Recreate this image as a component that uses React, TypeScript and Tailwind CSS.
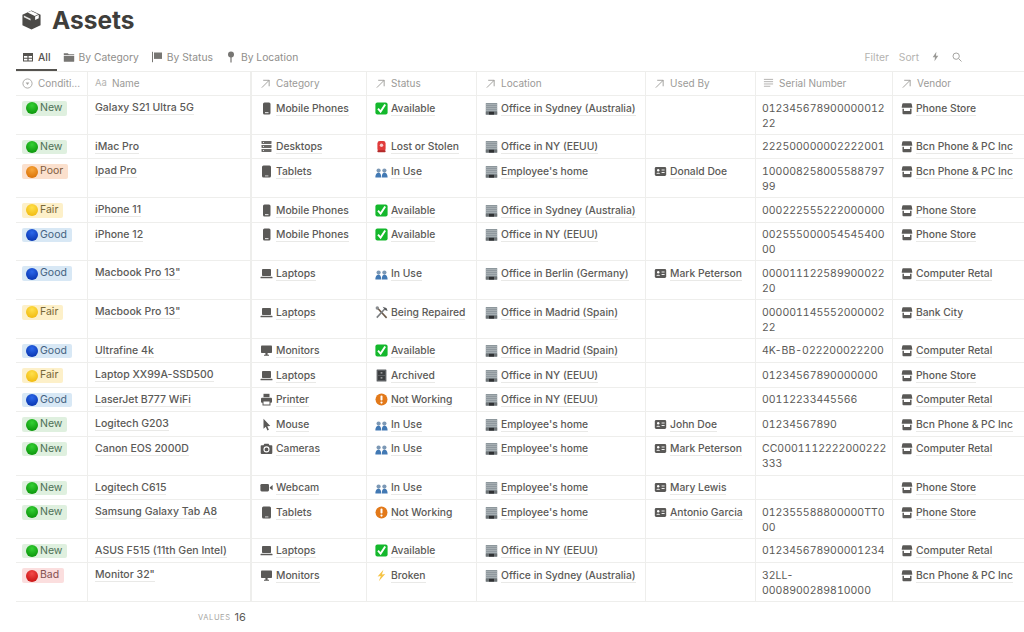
import type { ReactNode } from "react";

const font = "font-['Inter',sans-serif]";
const gridCols = "grid grid-cols-[72px_164px_115px_110px_169px_110px_137px_131px]";
const base = "w-[13px] h-[13px] shrink-0";

function PhoneIcon() {
  return (
    <svg viewBox="0 0 13 13" className={base}>
      <rect x="3" y="0.5" width="7.5" height="12" rx="1.5" fill="#5a5957" />
      <rect x="5" y="10" width="3.5" height="1.2" fill="#d8d8d8" />
    </svg>
  );
}
function TabletIcon() {
  return (
    <svg viewBox="0 0 13 13" className={base}>
      <rect x="2" y="0.5" width="9" height="12" rx="1.5" fill="#5a5957" />
      <rect x="5" y="10.4" width="3.4" height="1" fill="#cfcfcf" />
    </svg>
  );
}
function DesktopIcon() {
  return (
    <svg viewBox="0 0 13 13" className={base}>
      <rect x="1.5" y="1" width="10" height="3" rx="0.4" fill="#6a6967" />
      <rect x="1.5" y="5" width="10" height="3" rx="0.4" fill="#6a6967" />
      <rect x="1.5" y="9" width="10" height="3" rx="0.4" fill="#6a6967" />
      <path d="M3 2.5h1M3 6.5h1M3 10.5h1" stroke="#fff" strokeWidth="0.8" />
    </svg>
  );
}
function LaptopIcon() {
  return (
    <svg viewBox="0 0 13 13" className={base}>
      <rect x="2" y="2" width="9" height="7" rx="0.8" fill="#5a5957" />
      <rect x="0.5" y="9.7" width="12" height="1.6" rx="0.6" fill="#5a5957" />
    </svg>
  );
}
function MonitorIcon() {
  return (
    <svg viewBox="0 0 13 13" className={base}>
      <rect x="1" y="1.5" width="11" height="7.6" rx="0.8" fill="#5a5957" />
      <path d="M5.4 9.1h2.2v1.6H9v1H4v-1h1.4z" fill="#5a5957" />
    </svg>
  );
}
function PrinterIcon() {
  return (
    <svg viewBox="0 0 13 13" className={base}>
      <rect x="3.5" y="0.8" width="6" height="3.4" fill="#5a5957" />
      <rect x="1" y="4.8" width="11" height="5" rx="1" fill="#5a5957" />
      <rect x="3" y="8" width="7" height="4" fill="#fff" stroke="#5a5957" strokeWidth="1" />
    </svg>
  );
}
function MouseIcon() {
  return (
    <svg viewBox="0 0 13 13" className={base}>
      <path d="M3.5 0.8v10l2.3-2 1.6 3.6 1.5-.7-1.6-3.4 3-.3z" fill="#5a5957" />
    </svg>
  );
}
function CameraIcon() {
  return (
    <svg viewBox="0 0 13 13" className={base}>
      <path d="M4.4 1.8h4.2l.9 1.5h2a.8.8 0 0 1 .8.8v7a.8.8 0 0 1-.8.8H1.5a.8.8 0 0 1-.8-.8v-7a.8.8 0 0 1 .8-.8h2z" fill="#5a5957" />
      <circle cx="6.5" cy="7.4" r="2.5" fill="none" stroke="#fff" strokeWidth="1.1" />
    </svg>
  );
}
function WebcamIcon() {
  return (
    <svg viewBox="0 0 13 13" className={base}>
      <rect x="0.4" y="3" width="8.6" height="7.4" rx="1.3" fill="#5a5957" />
      <path d="M9.8 6.2l2.8-2.1v5.2L9.8 7.2z" fill="#5a5957" />
    </svg>
  );
}
function StoreIcon() {
  return (
    <svg viewBox="0 0 13 13" className="w-[12px] h-[13px] shrink-0">
      <path d="M2.4 .8h8.2a1 1 0 0 1 1 .8l.6 3.2v1H.8v-1l.6-3.2a1 1 0 0 1 1-.8z" fill="#5a5957" />
      <path d="M1.6 6.8h1.6v2.4h6.6V6.8h1.6v4.8a1 1 0 0 1-1 1H2.6a1 1 0 0 1-1-1z" fill="#5a5957" />
    </svg>
  );
}
function ContactIcon() {
  return (
    <svg viewBox="0 0 13 13" className={base}>
      <rect x="0.8" y="2" width="11.4" height="9" rx="1.4" fill="#5a5957" />
      <circle cx="4.2" cy="5.3" r="1.2" fill="#fff" />
      <path d="M2.4 8.8c.3-1.3 3.3-1.3 3.6 0z" fill="#fff" />
      <path d="M7.6 5h3M7.6 7.5h3" stroke="#fff" strokeWidth="0.9" />
    </svg>
  );
}

function CheckEmoji() {
  return (
    <svg viewBox="0 0 13 13" className={base}>
      <rect x="0.4" y="0.4" width="12.2" height="12.2" rx="2" fill="#14b82c" />
      <path d="M3 6.6l2.6 3L10.2 2.6" fill="none" stroke="#fff" strokeWidth="1.9" />
    </svg>
  );
}
function SirenEmoji() {
  return (
    <svg viewBox="0 0 13 13" className={base}>
      <rect x="2.4" y="1" width="8.2" height="10.4" rx="2.4" fill="#e03b3b" />
      <rect x="2.4" y="10.2" width="8.2" height="2" rx="0.8" fill="#b22a2a" />
      <circle cx="6.5" cy="5.2" r="1.7" fill="#fbd0d0" />
    </svg>
  );
}
function BustsEmoji() {
  return (
    <svg viewBox="0 0 13 13" className={base}>
      <circle cx="3.6" cy="5.6" r="2.1" fill="#7c98b5" />
      <circle cx="9.4" cy="5.6" r="2.1" fill="#7c98b5" />
      <path d="M.4 12.6c0-3.6 1.6-4.8 3.2-4.8s2.6 1.2 2.6 4.8zM6.8 12.6c0-3.6 1-4.8 2.6-4.8s3.2 1.2 3.2 4.8z" fill="#4279b4" />
    </svg>
  );
}
function BuildingEmoji() {
  return (
    <svg viewBox="0 0 13 13" className={base}>
      <rect x="0.8" y="1" width="11.4" height="11.6" fill="#8d979c" />
      <path d="M0.8 2.6h11.4M0.8 4.6h11.4M0.8 6.6h11.4M0.8 8.4h11.4" stroke="#b5bcc0" strokeWidth="0.7" />
      <rect x="0.8" y="9.6" width="11.4" height="3" fill="#6d7376" />
      <rect x="4" y="9.8" width="5" height="2.8" fill="#2f3133" />
    </svg>
  );
}
function ToolsEmoji() {
  return (
    <svg viewBox="0 0 13 13" className={base}>
      <path d="M2 1.5l9.6 10.4" stroke="#6b5a4a" strokeWidth="1.6" />
      <path d="M10.6 2L1.8 11.6" stroke="#7d8083" strokeWidth="1.6" />
      <path d="M7.6 .8l4 1.4 1 2.8-2.2-.7-1.4-1.7z" fill="#55585b" />
      <circle cx="2.3" cy="2" r="1.7" fill="#8a8d90" />
    </svg>
  );
}
function CabinetEmoji() {
  return (
    <svg viewBox="0 0 13 13" className={base}>
      <rect x="1.6" y="0.5" width="9.8" height="12" rx="0.6" fill="#5d6063" />
      <rect x="3" y="2" width="7" height="4" fill="#3b3d3f" />
      <rect x="3" y="7" width="7" height="4" fill="#3b3d3f" />
      <rect x="5.6" y="3.4" width="1.8" height="1" fill="#d4d4d4" />
      <rect x="5.6" y="8.4" width="1.8" height="1" fill="#d4d4d4" />
    </svg>
  );
}
function AlertEmoji() {
  return (
    <svg viewBox="0 0 13 13" className={base}>
      <circle cx="6.5" cy="6.5" r="6" fill="#e2791a" />
      <rect x="5.5" y="2.6" width="2" height="5" rx="0.8" fill="#fff" />
      <circle cx="6.5" cy="9.6" r="1.1" fill="#fff" />
    </svg>
  );
}
function BoltEmoji() {
  return (
    <svg viewBox="0 0 13 13" className={base}>
      <path d="M8.4.8L2.6 7.4l3.2-.3-2 5.2 6.4-7.2-3.3.4z" fill="#f6c445" />
    </svg>
  );
}

function Dot({ id, light, dark }: { id: string; light: string; dark: string }) {
  return (
    <svg viewBox="0 0 12 12" className="w-[12px] h-[12px] shrink-0">
      <defs>
        <radialGradient id={`dot-${id}`} cx="50%" cy="30%" r="75%">
          <stop offset="0%" stopColor={light} />
          <stop offset="100%" stopColor={dark} />
        </radialGradient>
      </defs>
      <circle cx="6" cy="6" r="6" fill={`url(#dot-${id})`} />
    </svg>
  );
}

const conditions: Record<string, { pill: string; text: string; light: string; dark: string }> = {
  New: { pill: "bg-[#dff0df]", text: "text-[#4c6f55]", light: "#35d035", dark: "#089208" },
  Poor: { pill: "bg-[#fbe0cd]", text: "text-[#7e5c3f]", light: "#f7a63a", dark: "#d96f05" },
  Fair: { pill: "bg-[#fdf0c9]", text: "text-[#776738]", light: "#ffe04a", dark: "#f0b80c" },
  Good: { pill: "bg-[#d8e8f5]", text: "text-[#44627f]", light: "#2b67ea", dark: "#0733ad" },
  Bad: { pill: "bg-[#fbdede]", text: "text-[#855050]", light: "#f24a4a", dark: "#c71010" },
};

const categories: Record<string, ReactNode> = {
  "Mobile Phones": <PhoneIcon />,
  Desktops: <DesktopIcon />,
  Tablets: <TabletIcon />,
  Laptops: <LaptopIcon />,
  Monitors: <MonitorIcon />,
  Printer: <PrinterIcon />,
  Mouse: <MouseIcon />,
  Cameras: <CameraIcon />,
  Webcam: <WebcamIcon />,
};

const statuses: Record<string, ReactNode> = {
  Available: <CheckEmoji />,
  "Lost or Stolen": <SirenEmoji />,
  "In Use": <BustsEmoji />,
  "Being Repaired": <ToolsEmoji />,
  Archived: <CabinetEmoji />,
  "Not Working": <AlertEmoji />,
  Broken: <BoltEmoji />,
};

const rows = [
  { tall: true, condition: "New", name: "Galaxy S21 Ultra 5G", category: "Mobile Phones", status: "Available", location: "Office in Sydney (Australia)", user: "", serial: "012345678900000012\n22", vendor: "Phone Store" },
  { tall: false, condition: "New", name: "iMac Pro", category: "Desktops", status: "Lost or Stolen", location: "Office in NY (EEUU)", user: "", serial: "222500000002222001", vendor: "Bcn Phone & PC Inc" },
  { tall: true, condition: "Poor", name: "Ipad Pro", category: "Tablets", status: "In Use", location: "Employee's home", user: "Donald Doe", serial: "100008258005588797\n99", vendor: "Bcn Phone & PC Inc" },
  { tall: false, condition: "Fair", name: "iPhone 11", category: "Mobile Phones", status: "Available", location: "Office in Sydney (Australia)", user: "", serial: "000222555222000000", vendor: "Phone Store" },
  { tall: true, condition: "Good", name: "iPhone 12", category: "Mobile Phones", status: "Available", location: "Office in NY (EEUU)", user: "", serial: "002555000054545400\n00", vendor: "Phone Store" },
  { tall: true, condition: "Good", name: "Macbook Pro 13\"", category: "Laptops", status: "In Use", location: "Office in Berlin (Germany)", user: "Mark Peterson", serial: "000011122589900022\n20", vendor: "Computer Retal" },
  { tall: true, condition: "Fair", name: "Macbook Pro 13\"", category: "Laptops", status: "Being Repaired", location: "Office in Madrid (Spain)", user: "", serial: "000001145552000002\n22", vendor: "Bank City" },
  { tall: false, condition: "Good", name: "Ultrafine 4k", category: "Monitors", status: "Available", location: "Office in Madrid (Spain)", user: "", serial: "4K-BB-022200022200", vendor: "Computer Retal" },
  { tall: false, condition: "Fair", name: "Laptop XX99A-SSD500", category: "Laptops", status: "Archived", location: "Office in NY (EEUU)", user: "", serial: "01234567890000000", vendor: "Phone Store" },
  { tall: false, condition: "Good", name: "LaserJet B777 WiFi", category: "Printer", status: "Not Working", location: "Office in NY (EEUU)", user: "", serial: "00112233445566", vendor: "Computer Retal" },
  { tall: false, condition: "New", name: "Logitech G203", category: "Mouse", status: "In Use", location: "Employee's home", user: "John Doe", serial: "01234567890", vendor: "Bcn Phone & PC Inc" },
  { tall: true, condition: "New", name: "Canon EOS 2000D", category: "Cameras", status: "In Use", location: "Employee's home", user: "Mark Peterson", serial: "CC0001112222000222\n333", vendor: "Computer Retal" },
  { tall: false, condition: "New", name: "Logitech C615", category: "Webcam", status: "In Use", location: "Employee's home", user: "Mary Lewis", serial: "", vendor: "Phone Store" },
  { tall: true, condition: "New", name: "Samsung Galaxy Tab A8", category: "Tablets", status: "Not Working", location: "Employee's home", user: "Antonio Garcia", serial: "012355588800000TT0\n00", vendor: "Phone Store" },
  { tall: false, condition: "New", name: "ASUS F515 (11th Gen Intel)", category: "Laptops", status: "Available", location: "Office in NY (EEUU)", user: "", serial: "012345678900001234", vendor: "Computer Retal" },
  { tall: true, condition: "Bad", name: "Monitor 32\"", category: "Monitors", status: "Broken", location: "Office in Sydney (Australia)", user: "", serial: "32LL-\n0008900289810000", vendor: "Bcn Phone & PC Inc" },
];

function Linked({ icon, label }: { icon: ReactNode; label: string }) {
  return (
    <div className="flex items-start gap-[3px] pt-[5.5px] text-[10.3px] leading-[13px] font-medium text-[#5b5a57] whitespace-nowrap">
      {icon}
      <span className="border-b border-[#e9e9e7]">{label}</span>
    </div>
  );
}

function Arrow() {
  return (
    <svg viewBox="0 0 12 12" className="w-[11px] h-[11px] shrink-0" fill="none" stroke="#9b9a97" strokeWidth="1">
      <path d="M2 10.5L10 2.5M3.5 2.5H10V9" />
    </svg>
  );
}

function HeaderCell({ icon, label, className = "" }: { icon: ReactNode; label: string; className?: string }) {
  return (
    <div className={`flex items-center gap-[5px] pl-2 border-r border-[#eeeeec] text-[10px] text-[#9b9a97] whitespace-nowrap ${className}`}>
      {icon}
      <span>{label}</span>
    </div>
  );
}

function TableRow({ row, index }: { row: (typeof rows)[number]; index: number }) {
  const c = conditions[row.condition];
  return (
    <div className={`${gridCols} ${row.tall ? "h-[38.75px]" : "h-[24.5px]"} border-b border-[#eeeeec]`}>
      <div className="border-r border-[#eeeeec] pl-[6px] pt-[5px]">
        <span className={`flex w-fit items-center h-[14.5px] pl-[4px] pr-[5px] rounded-[2px] gap-[2px] text-[10.5px] leading-none ${c.pill} ${c.text}`}>
          <Dot id={String(index)} light={c.light} dark={c.dark} />
          {row.condition}
        </span>
      </div>
      <div className="border-r-2 border-[#eeeeec] pl-[7px] pt-[5px] text-[10.5px] leading-[13px] font-medium text-[#5b5a57] whitespace-nowrap">
        <span className="border-b border-[#e9e9e7]">{row.name}</span>
      </div>
      <div className="border-r border-[#eeeeec] pl-2">
        <Linked icon={categories[row.category]} label={row.category} />
      </div>
      <div className="border-r border-[#eeeeec] pl-2">
        <Linked icon={statuses[row.status]} label={row.status} />
      </div>
      <div className="border-r border-[#eeeeec] pl-2">
        <Linked icon={<BuildingEmoji />} label={row.location} />
      </div>
      <div className="border-r border-[#eeeeec] pl-2">
        {row.user && <Linked icon={<ContactIcon />} label={row.user} />}
      </div>
      <div className="border-r border-[#eeeeec] pl-[6px] pt-[4.5px] text-[10.5px] leading-[15px] tabular-nums text-[#5b5a57] whitespace-pre">
        {row.serial}
      </div>
      <div className="pl-2">
        <Linked icon={<StoreIcon />} label={row.vendor} />
      </div>
    </div>
  );
}

export default function App() {
  return (
    <div className={`w-[1024px] h-[632px] overflow-hidden bg-white ${font}`}>
      <div className="flex items-center gap-[10px] pl-[21px] h-[40px] mb-[4px]">
        <svg viewBox="0 0 22 22" className="w-[21px] h-[22px]">
          <path d="M11 1l9.5 4.6v10.8L11 21 1.5 16.4V5.6z" fill="#4b4a47" />
          <path d="M7 3.2l3.6-1.6 7.4 3.4-3.6 1.7z" fill="#fff" />
          <path d="M14.8 7.4l3.8-1.8v3.6l-3.8 1.8z" fill="#fff" />
          <path d="M3 6.4l7 3.4v1.6L3 8z" fill="#fff" opacity="0.85" />
        </svg>
        <h1 className="text-[24.5px] leading-none font-bold text-[#3f3e3b]">Assets</h1>
      </div>

      <div className="flex items-start justify-between pl-[16px] h-[27px] text-[10.3px] leading-[26px]">
        <div className="flex">
          <div className="flex items-center gap-1 px-[6px] h-[27px] border-b-2 border-[#55534f] font-medium text-[#55534f]">
            <svg viewBox="0 0 12 12" className="w-[12px] h-[12px]" fill="#55534f">
              <path d="M1 2h10v8.5H1zM2 5v1.7h3.4V5zm4.6 0v1.7H10V5zM2 7.8v1.6h3.4V7.8zm4.6 0v1.6H10V7.8z" fillRule="evenodd" />
            </svg>
            All
          </div>
          <div className="flex items-center gap-1 px-[6px] h-[25px] text-[#8f8e8b]">
            <svg viewBox="0 0 12 12" className="w-[12px] h-[12px]" fill="#777673">
              <path d="M.8 2.2h4l1 1.1h5.4v1H.8zM.8 5h10.4v5.2a.6.6 0 0 1-.6.6H1.4a.6.6 0 0 1-.6-.6z" />
            </svg>
            By Category
          </div>
          <div className="flex items-center gap-1 px-[6px] h-[25px] text-[#8f8e8b]">
            <svg viewBox="0 0 12 12" className="w-[12px] h-[12px]" fill="#777673">
              <rect x="1" y="0.8" width="1" height="10.4" />
              <rect x="3" y="1.5" width="8" height="6.4" />
            </svg>
            By Status
          </div>
          <div className="flex items-center gap-1 px-[6px] h-[25px] text-[#8f8e8b]">
            <svg viewBox="0 0 12 12" className="w-[12px] h-[12px]" fill="#777673">
              <circle cx="6" cy="3.5" r="3" />
              <rect x="5.4" y="6" width="1.2" height="5.5" />
            </svg>
            By Location
          </div>
        </div>
        <div className="flex items-center h-[25px] pr-[62px] text-[#b4b3b0]">
          <span className="mr-[10px]">Filter</span>
          <span className="mr-[13px]">Sort</span>
          <svg viewBox="0 0 8 12" className="w-[7px] h-[11px] mr-[13px]" fill="#9b9a97">
            <path d="M5 .5L.8 6.8h2.6L2.8 11.5 7.2 5H4.5z" />
          </svg>
          <svg viewBox="0 0 12 12" className="w-[10px] h-[10px]" fill="none" stroke="#a5a4a1" strokeWidth="1.2">
            <circle cx="5" cy="5" r="3.8" />
            <path d="M8 8l3.4 3.4" />
          </svg>
        </div>
      </div>

      <div className="ml-[16px] w-[1008px] overflow-hidden border-t border-[#eeeeec]">
        <div className={`${gridCols} h-[24px] border-b border-[#eeeeec]`}>
          <HeaderCell
            className="pl-[6px]"
            icon={
              <svg viewBox="0 0 12 12" className="w-[11px] h-[11px] shrink-0" fill="none" stroke="#a5a4a1">
                <circle cx="6" cy="6" r="5" />
                <path d="M4 5h4L6 7.6z" fill="#a5a4a1" stroke="none" />
              </svg>
            }
            label="Conditi..."
          />
          <HeaderCell
            className="border-r-2 pl-[7px] gap-[3px]"
            icon={<span className="text-[#b4b3b0] text-[9.5px]">Aa</span>}
            label="Name"
          />
          <HeaderCell icon={<Arrow />} label="Category" />
          <HeaderCell icon={<Arrow />} label="Status" />
          <HeaderCell icon={<Arrow />} label="Location" />
          <HeaderCell icon={<Arrow />} label="Used By" />
          <HeaderCell
            className="pl-[7px]"
            icon={
              <svg viewBox="0 0 12 12" className="w-[11px] h-[11px] shrink-0" stroke="#a5a4a1" strokeWidth="0.9">
                <path d="M1 1.5h10M1 4h10M1 6.5h10M1 9h7" />
              </svg>
            }
            label="Serial Number"
          />
          <HeaderCell className="border-r-0" icon={<Arrow />} label="Vendor" />
        </div>
        {rows.map((row, i) => (
          <TableRow key={i} row={row} index={i} />
        ))}
      </div>

      <div className="flex items-center gap-1 pl-[198px] pt-[7px]">
        <span className="text-[7.5px] tracking-[0.6px] text-[#a5a4a1]">VALUES</span>
        <span className="text-[11px] text-[#5b5a57]">16</span>
      </div>
    </div>
  );
}
